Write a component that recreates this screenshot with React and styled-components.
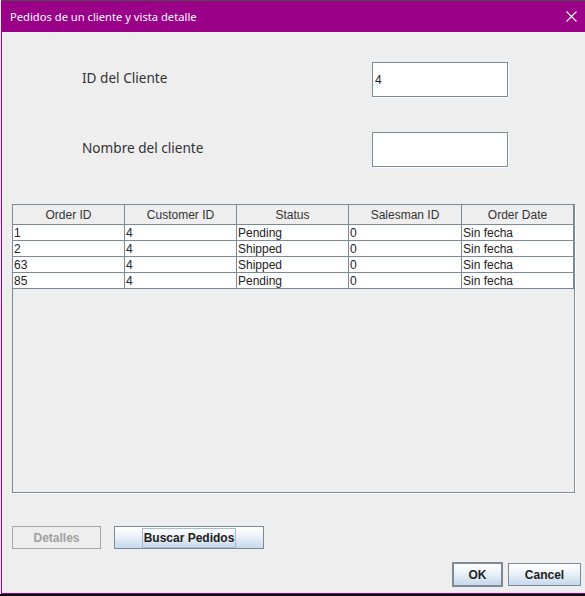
import React from 'react';
import styled, { createGlobalStyle } from 'styled-components';

const Global = createGlobalStyle`
  html, body {
    margin: 0;
    padding: 0;
    background: #0b0b0b;
  }
  body {
    width: 585px;
    height: 596px;
    overflow: hidden;
  }
`

const Window = styled.div`
  margin-left: 1px;
  width: 584px;
  height: 594px;
  box-sizing: border-box;
  display: flex;
  flex-direction: column;
  background: #eeeeee;
  border-left: 1px solid #9b0089;
  border-bottom: 1px solid #9b0089;
  box-shadow: -1px 0 0 #eeeeee;
`

const TitleBar = styled.div`
  height: 32px;
  box-sizing: border-box;
  display: flex;
  align-items: center;
  padding-left: 8px;
  background: #9b0089;
  border-top: 1px solid #4c4c4c;
  color: #ffffff;
  font: 11.2px "Noto Sans", "Open Sans", sans-serif;
`

const Close = styled.svg`
  margin-left: auto;
  margin-right: 8px;
`

const Body = styled.div`
  flex: 1;
  display: flex;
  flex-direction: column;
  padding-top: 30px;
`

const Form = styled.div`
  display: grid;
  grid-template-columns: 290px 136px;
  grid-auto-rows: 35px;
  row-gap: 35px;
  padding-left: 80px;
`

const Label = styled.div`
  align-self: center;
  padding-bottom: 4px;
  font: 13.6px "Noto Sans", "Open Sans", sans-serif;
  color: #333333;
`

const Field = styled.input`
  width: 136px;
  height: 35px;
  box-sizing: border-box;
  margin: 0;
  padding: 0 2px;
  border: 1px solid #7a8a99;
  box-shadow: 1px 1px 0 #ffffff;
  background: #ffffff;
  font: 12px "Liberation Sans", Arial, sans-serif;
  color: #222222;
  outline: none;
`

const TablePane = styled.div`
  margin: 37px 0 0 10px;
  width: 563px;
  height: 289px;
  box-sizing: border-box;
  border: 1px solid #7a8a99;
  box-shadow: 1px 1px 0 #ffffff;
  background: #eeeeee;
`

const Grid = styled.div`
  display: grid;
  grid-template-columns: 112px 112px 112px 113px 112px;
  font: 12px "Liberation Sans", Arial, sans-serif;
`

const HeadCell = styled.div`
  height: 20px;
  box-sizing: border-box;
  padding-top: 1px;
  line-height: 19px;
  text-align: center;
  color: #333333;
  border-right: 1px solid #7a8a99;
  border-bottom: 1px solid #7a8a99;
  overflow: hidden;
`

const Cell = styled.div`
  height: 16px;
  box-sizing: border-box;
  padding: 1px 0 0 1px;
  line-height: 15px;
  background: #ffffff;
  color: #222222;
  border-right: 1px solid #7a8a99;
  border-bottom: 1px solid #7a8a99;
  overflow: hidden;
`

const ActionRow = styled.div`
  display: flex;
  gap: 13px;
  margin: 33px 0 0 10px;
`

const DialogRow = styled.div`
  display: flex;
  align-items: center;
  justify-content: flex-end;
  gap: 5px;
  margin-top: 13px;
  padding-right: 4px;
`

const Button = styled.button`
  width: ${p => p.$w}px;
  height: ${p => (p.$default ? 25 : 23)}px;
  box-sizing: border-box;
  margin: 0;
  padding: 0;
  display: flex;
  align-items: center;
  justify-content: center;
  font: bold 12px "Liberation Sans", Arial, sans-serif;
  color: ${p => (p.disabled ? '#a0a0a0' : '#222222')};
  border: ${p => (p.$default ? 2 : 1)}px solid ${p => (p.disabled ? '#a6a6a6' : '#7a8a99')};
  background: ${p => p.disabled
    ? 'transparent'
    : 'linear-gradient(to bottom, #ffffff 0%, #f3f7fb 30%, #dde8f3 65%, #c6d8ea 100%)'};
`

const Focus = styled.span`
  display: inline-block;
  height: 20px;
  line-height: 18px;
  box-sizing: border-box;
  padding: 0 1px;
  border: 1px solid #a3bdd6;
`

const columns = ['Order ID', 'Customer ID', 'Status', 'Salesman ID', 'Order Date']

const orders = [
  ['1', '4', 'Pending', '0', 'Sin fecha'],
  ['2', '4', 'Shipped', '0', 'Sin fecha'],
  ['63', '4', 'Shipped', '0', 'Sin fecha'],
  ['85', '4', 'Pending', '0', 'Sin fecha'],
]

export default function App() {
  return (
    <>
      <Global />
      <Window>
        <TitleBar>
          Pedidos de un cliente y vista detalle
          <Close width="11" height="11" viewBox="0 0 11 11">
            <path d="M0.5 0.5 L10.5 10.5 M10.5 0.5 L0.5 10.5" stroke="#ffffff" strokeWidth="1.1" fill="none" />
          </Close>
        </TitleBar>
        <Body>
          <Form>
            <Label>ID del Cliente</Label>
            <Field readOnly value="4" />
            <Label>Nombre del cliente</Label>
            <Field readOnly value="" />
          </Form>
          <TablePane>
            <Grid>
              {columns.map(c => <HeadCell key={c}>{c}</HeadCell>)}
              {orders.map((row, i) =>
                row.map((v, j) => <Cell key={i + '-' + j}>{v}</Cell>)
              )}
            </Grid>
          </TablePane>
          <ActionRow>
            <Button $w={89} disabled>Detalles</Button>
            <Button $w={150}><Focus>Buscar Pedidos</Focus></Button>
          </ActionRow>
          <DialogRow>
            <Button $w={51} $default>OK</Button>
            <Button $w={73}>Cancel</Button>
          </DialogRow>
        </Body>
      </Window>
    </>
  )
}
